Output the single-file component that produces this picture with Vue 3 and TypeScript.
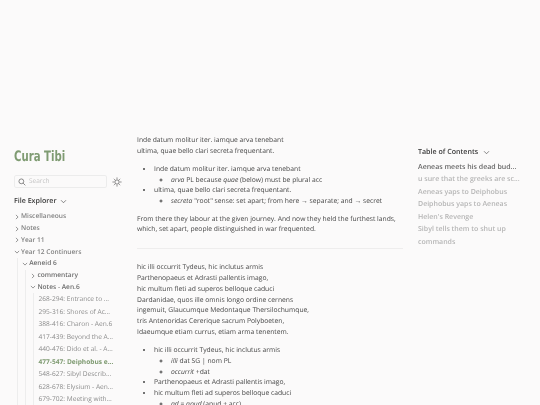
<script setup lang="ts">
interface Row { label: string; depth: number; kind: 'open' | 'closed' | 'file' | 'active' }
const rows: Row[] = [
  { label: 'Miscellaneous', depth: 0, kind: 'closed' },
  { label: 'Notes', depth: 0, kind: 'closed' },
  { label: 'Year 11', depth: 0, kind: 'closed' },
  { label: 'Year 12 Continuers', depth: 0, kind: 'open' },
  { label: 'Aeneid 6', depth: 1, kind: 'open' },
  { label: 'commentary', depth: 2, kind: 'closed' },
  { label: 'Notes - Aen.6', depth: 2, kind: 'open' },
  { label: '268-294: Entrance to ...', depth: 3, kind: 'file' },
  { label: '295-316: Shores of Ac...', depth: 3, kind: 'file' },
  { label: '388-416: Charon - Aen.6', depth: 3, kind: 'file' },
  { label: '417-439: Beyond the A...', depth: 3, kind: 'file' },
  { label: '440-476: Dido et al. - A...', depth: 3, kind: 'file' },
  { label: '477-547: Deiphobus e...', depth: 3, kind: 'active' },
  { label: '548-627: Sibyl Describ...', depth: 3, kind: 'file' },
  { label: '628-678: Elysium - Aen...', depth: 3, kind: 'file' },
  { label: '679-702: Meeting with...', depth: 3, kind: 'file' },
]
const toc = [
  'Aeneas meets his dead bud...',
  'u sure that the greeks are sc...',
  'Aeneas yaps to Deiphobus',
  'Deiphobus yaps to Aeneas',
  "Helen's Revenge",
  'Sibyl tells them to shut up',
  'commands',
]
</script>

<template>
  <div class="page">
    <aside class="left">
      <h1 class="title">Cura Tibi</h1>
      <div class="searchrow">
        <div class="search">
          <svg class="searchicon" viewBox="0 0 12 12"><circle cx="5" cy="5" r="3.6" /><path d="M7.7 7.7 11 11" /></svg>
          <span>Search</span>
        </div>
        <svg class="sun" viewBox="0 0 12 12">
          <circle cx="6" cy="6" r="2.6" />
          <path d="M6 .6v1.6M6 9.8v1.6M.6 6h1.6M9.8 6h1.6M2.2 2.2l1.1 1.1M8.7 8.7l1.1 1.1M2.2 9.8l1.1-1.1M8.7 3.3l1.1-1.1" />
        </svg>
      </div>
      <div class="explorer">
        <span>File Explorer</span>
        <svg class="chev big" viewBox="0 0 10 10"><path d="M1.5 3.2 5 6.8l3.5-3.6" /></svg>
      </div>
      <ul class="tree">
        <li v-for="r in rows" :key="r.label" class="row" :class="[`d${r.depth}`, r.kind]">
          <i v-for="n in r.depth" :key="n" class="guide"></i>
          <svg v-if="r.kind === 'closed' || r.kind === 'open'" class="chev" viewBox="0 0 10 10">
            <path v-if="r.kind === 'open'" d="M1.5 3.2 5 6.8l3.5-3.6" />
            <path v-else d="M3.2 1.5 6.8 5 3.2 8.5" />
          </svg>
          <span>{{ r.label }}</span>
        </li>
      </ul>
    </aside>

    <main class="center">
      <p>Inde datum molitur iter. iamque arva tenebant<br />ultima, quae bello clari secreta frequentant.</p>
      <ul class="bul">
        <li>Inde datum molitur iter. iamque arva tenebant
          <ul><li><em>arva</em> PL because <em>quae</em> (below) must be plural acc</li></ul>
        </li>
        <li>ultima, quae bello clari secreta frequentant.
          <ul><li><em>secreta</em> "root" sense: set apart; from here → separate; and → secret</li></ul>
        </li>
      </ul>
      <p>From there they labour at the given journey. And now they held the furthest lands, which, set apart, people distinguished in war frequented.</p>
      <hr />
      <p>hic illi occurrit Tydeus, hic inclutus armis<br />Parthenopaeus et Adrasti pallentis imago,<br />hic multum fleti ad superos belloque caduci<br />Dardanidae, quos ille omnis longo ordine cernens<br />ingemuit, Glaucumque Medontaque Thersilochumque,<br />tris Antenoridas Cererique sacrum Polyboeten,<br />Idaeumque etiam currus, etiam arma tenentem.</p>
      <ul class="bul">
        <li>hic illi occurrit Tydeus, hic inclutus armis
          <ul><li><em>illi</em> dat SG | nom PL</li><li><em>occurrit</em> +dat</li></ul>
        </li>
        <li>Parthenopaeus et Adrasti pallentis imago,</li>
        <li>hic multum fleti ad superos belloque caduci
          <ul><li><em>ad</em> = <em>apud</em> (apud + acc)</li></ul>
        </li>
      </ul>
    </main>

    <aside class="right">
      <div class="tochead">
        <span>Table of Contents</span>
        <svg class="chev big" viewBox="0 0 10 10"><path d="M1.5 3.2 5 6.8l3.5-3.6" /></svg>
      </div>
      <ul class="toc">
        <li v-for="(t, i) in toc" :key="t" :class="{ on: i === 0 }">{{ t }}</li>
      </ul>
    </aside>
  </div>
</template>

<style>
html, body { margin: 0; padding: 0; background: #fbfafa; overflow: hidden; }
</style>

<style scoped>
.page {
  width: 540px;
  height: 405px;
  overflow: hidden;
  display: grid;
  grid-template-columns: 137px 266px 137px;
  font-family: "Open Sans", sans-serif;
  color: #464646;
  font-size: 6.75px;
  line-height: 10.8px;
  text-rendering: geometricPrecision;
  filter: blur(.25px);
}
ul { list-style: none; margin: 0; padding: 0; }
.left { padding: 148px 0 0 14px; min-width: 0; }
.title {
  margin: 0;
  font-family: "DejaVu Sans", sans-serif;
  font-size: 14.5px;
  line-height: 18px;
  font-weight: 700;
  color: #7f9b72;
  transform: scaleX(.7);
  transform-origin: left center;
  white-space: nowrap;
}
.searchrow { display: flex; align-items: center; gap: 5px; margin-top: 9px; }
.search {
  width: 93px;
  height: 13px;
  box-sizing: border-box;
  border: 1px solid #ececec;
  border-radius: 2px;
  display: flex;
  align-items: center;
  gap: 3px;
  padding-left: 3px;
  font-size: 6.5px;
  color: #c4c4c4;
}
.searchicon { width: 8px; height: 8px; fill: none; stroke: #555; stroke-width: 1; }
.sun { width: 10px; height: 10px; fill: none; stroke: #444; stroke-width: .8; }
.explorer {
  display: flex;
  align-items: center;
  gap: 4px;
  margin-top: 8px;
  font-size: 7.1px;
  font-weight: 600;
  color: #3a3a3a;
  height: 11px;
}
.chev { width: 6px; height: 6px; flex: none; fill: none; stroke: #555; stroke-width: 1; margin-right: 1px; }
.chev.big { width: 7px; height: 7px; }
.tree { margin-top: 4px; font-size: 6.6px; }
.row {
  display: flex;
  align-items: center;
  height: 11.75px;
  white-space: nowrap;
  font-weight: 600;
  color: #808080;
}
.row.d1, .row.d2 { color: #6c6c6c; }
.row.file { font-weight: 400; color: #8c8c8c; height: 12.5px; }
.row.active { font-weight: 700; color: #7f9b72; height: 12.5px; }
.guide {
  flex: none;
  width: 8.2px;
  align-self: stretch;
  background: linear-gradient(#ededed, #ededed) 2.5px 0 / 1px 100% no-repeat;
}
.center { padding-top: 135px; min-width: 0; }
.center p { margin: 0; }
.bul { margin: 7.2px 0 6.6px; padding-left: 17px; list-style: disc; }
.bul ul { padding-left: 17px; list-style: circle; }
hr { border: none; border-top: 1px solid #eeeded; margin: 12.5px 0 13.5px; }
.right { padding: 147px 0 0 15px; min-width: 0; }
.tochead { display: flex; align-items: center; gap: 5px; font-size: 7.1px; font-weight: 600; color: #3a3a3a; height: 11px; }
.toc { margin-top: 3.5px; font-size: 7px; font-weight: 600; color: #b5b5b5; }
.toc li { height: 12.5px; line-height: 12.5px; white-space: nowrap; }
.toc li.on { color: #666; }
</style>
